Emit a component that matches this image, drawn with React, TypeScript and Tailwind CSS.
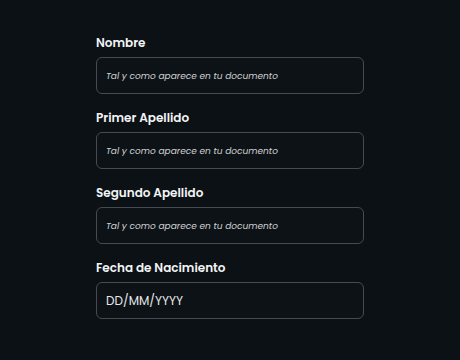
const fields = [
  { label: "Nombre", placeholder: "Tal y como aparece en tu documento" },
  { label: "Primer Apellido", placeholder: "Tal y como aparece en tu documento" },
  { label: "Segundo Apellido", placeholder: "Tal y como aparece en tu documento" },
];

export default function App() {
  return (
    <div
      className="min-h-[360px] w-full bg-[#0b1115] pt-[34px]"
      style={{ fontFamily: "Poppins, 'Open Sans', 'Liberation Sans', sans-serif" }}
    >
      <div className="mx-auto flex w-[268px] flex-col gap-[15px]">
        {fields.map((f) => (
          <div key={f.label}>
            <p className="mb-[5px] text-[12px] font-semibold leading-[18px] text-[#f3f4f5]">{f.label}</p>
            <div className="flex h-[37px] items-center rounded-[6px] border border-[#464b51] bg-[#0d1216] px-[9px] pt-[2px]">
              <span className="text-[9px] italic text-[#d0d2d4]">{f.placeholder}</span>
            </div>
          </div>
        ))}
        <div>
          <p className="mb-[5px] text-[12px] font-semibold leading-[18px] text-[#f3f4f5]">Fecha de Nacimiento</p>
          <div className="flex h-[37px] items-center rounded-[6px] border border-[#464b51] bg-[#0d1216] px-[9px]">
            <span className="text-[12px] text-[#e6e7e8]">DD/MM/YYYY</span>
          </div>
        </div>
      </div>
    </div>
  );
}
